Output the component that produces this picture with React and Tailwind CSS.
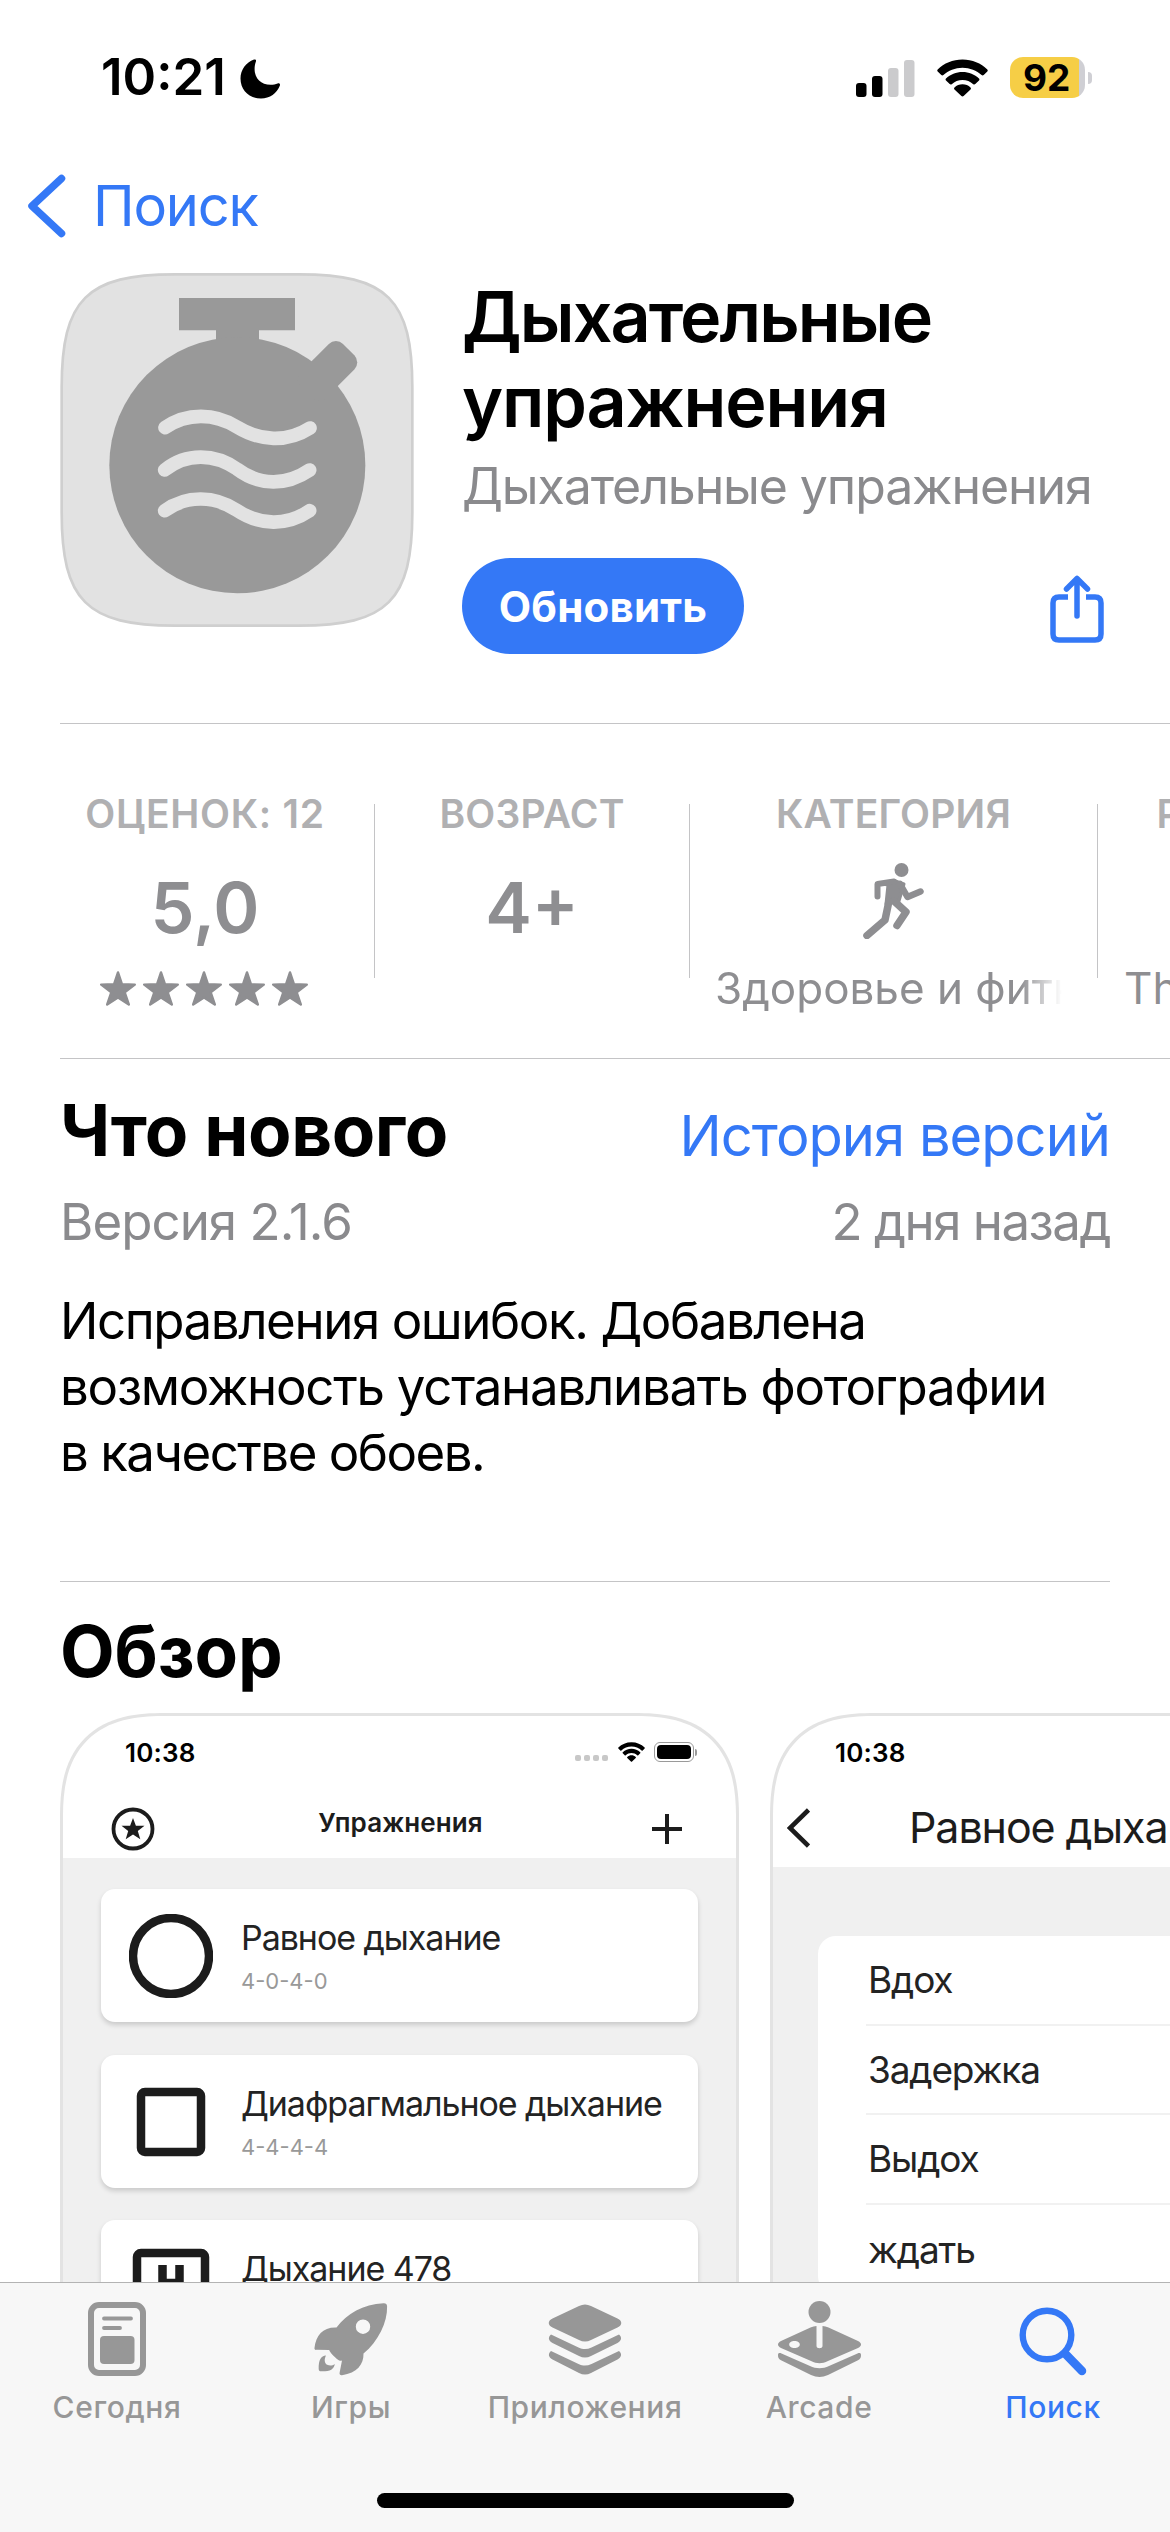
import React from 'react';

const MoonIcon = () => (
  <svg className="h-[40px] w-[41px]" viewBox="0 0 41 40" fill="currentColor">
    <path d="M14 .6c1.200-.5 2.400.4 2 1.700-1 2.800-1.400 5-1.400 7.700 0 9.500 6.500 15.800 16 15.800 2.700 0 5-.5 7-1.300 1.600-.7 2.900.5 2.300 2C37 34.400 29.800 39.500 21 39.500 9.200 39.500.5 31 .5 19.500.5 11 6 3.500 14 .6z" />
  </svg>
);

const SignalIcon = () => (
  <svg className="h-[38px] w-[59px]" viewBox="0 0 59 38">
    <rect x="0" y="24" width="10.500" height="14" rx="3" fill="#000" />
    <rect x="16" y="17" width="10.500" height="21" rx="3" fill="#000" />
    <rect x="32" y="9" width="10.500" height="29" rx="3" fill="#cbcbcd" />
    <rect x="48" y="1" width="10.500" height="37" rx="3" fill="#cbcbcd" />
  </svg>
);

const WifiIcon = ({ className }) => (
  <svg className={className} viewBox="0 0 51 37" fill="currentColor">
    <path d="M25.500 0C35.300 0 44 3.800 50.300 9.900c.6.600.6 1.500 0 2.100l-3.600 3.600c-.6.600-1.500.6-2.100 0C39.600 11 32.900 8.200 25.500 8.200S11.400 11 6.400 15.600c-.6.600-1.500.6-2.100 0L.7 12c-.6-.6-.6-1.500 0-2.100C7 3.800 15.700 0 25.500 0z" />
    <path d="M25.500 12.400c6.400 0 12.200 2.500 16.500 6.500.6.600.6 1.500 0 2.100l-3.700 3.600c-.5.600-1.400.6-2 .1-2.900-2.600-6.700-4.200-10.800-4.200s-7.900 1.600-10.800 4.200c-.6.500-1.500.5-2-.1L9 21c-.6-.6-.6-1.500 0-2.100 4.300-4 10.100-6.500 16.500-6.500z" />
    <path d="M25.500 24.800c3.100 0 5.900 1.200 8 3.100.6.600.6 1.500 0 2.100l-6.900 6.600c-.6.600-1.600.6-2.200 0L17.500 30c-.6-.6-.6-1.500 0-2.100 2.100-1.900 4.900-3.100 8-3.100z" />
  </svg>
);

const AppIcon = () => (
  <svg className="size-[354px] shrink-0" viewBox="60 68 1062 1062">
    <path
      d="M405 72H777C1042 72 1117 147 1117 412V786C1117 1051 1042 1126 777 1126H405C140 1126 65 1051 65 786V412C65 147 140 72 405 72z"
      fill="#e2e2e2"
      stroke="#cfcfcf"
      strokeWidth="8"
    />
    <g fill="#999">
      <path d="M417 143h348v97H657v60H528v-60H417z" />
      <circle cx="592" cy="645" r="384" />
      <rect x="-54" y="0" width="108" height="180" rx="30" transform="translate(926 298) rotate(45)" />
    </g>
    <g fill="none" stroke="#e2e2e2" strokeWidth="41" strokeLinecap="round">
      <path d="M375 532C440 486 525 488 591 530C660 572 740 578 810 533" />
      <path d="M374 659C440 606 525 610 591 656C660 708 740 706 809 659" />
      <path d="M374 781C440 733 525 736 591 780C660 826 740 828 809 781" />
    </g>
  </svg>
);

const ShareIcon = () => (
  <svg
    className="h-[68px] w-[54px]"
    viewBox="0 0 54 68"
    fill="none"
    stroke="currentColor"
    strokeWidth="5.500"
    strokeLinecap="round"
    strokeLinejoin="round"
  >
    <path d="M18 22h-9c-4 0-6 2-6 6v31c0 4 2 6 6 6h36c4 0 6-2 6-6V28c0-4-2-6-6-6h-9" strokeLinecap="butt" />
    <path d="M27 41V4M16.500 14L27 3.500 37.500 14" />
  </svg>
);

const Star = ({ className }) => (
  <svg
    className={className}
    viewBox="0 0 36 35"
    fill="currentColor"
    stroke="currentColor"
    strokeWidth="2.400"
    strokeLinejoin="round"
  >
    <path d="M18 1.500L22 13.300L34.800 13.600L24.700 21.300L28.800 33.500L18 26.400L7.200 33.500L11.300 21.300L1.200 13.600L14 13.300z" />
  </svg>
);

const RunnerIcon = () => (
  <svg className="h-[76px] w-[61px]" viewBox="0 0 61 76" fill="none" stroke="currentColor" strokeLinecap="round" strokeLinejoin="round">
    <circle cx="38.500" cy="7" r="7" fill="currentColor" stroke="none" />
    <path d="M17 20.500L31 17.500L41 21L36 38L23 41L25 22z" fill="currentColor" strokeWidth="3" />
    <path d="M14.500 33.500V21L31 18.500" strokeWidth="6" />
    <path d="M37 21L44.500 34L57.500 28.500" strokeWidth="6.500" />
    <path d="M26 38L22 57L4 72.500" strokeWidth="7.500" />
    <path d="M31 38L43 49L34 62.500" strokeWidth="7.500" />
  </svg>
);

const TodayIcon = () => (
  <svg className="h-[74px] w-[58px]" viewBox="0 0 58 74">
    <rect x="3" y="3" width="52" height="68" rx="8" fill="none" stroke="currentColor" strokeWidth="6" />
    <path d="M16 16.500h27M16 26h16" stroke="currentColor" strokeWidth="3.800" strokeLinecap="round" />
    <rect x="12" y="34" width="34.500" height="28" rx="4" fill="currentColor" />
  </svg>
);

const RocketIcon = () => (
  <svg className="h-[73px] w-[74px]" viewBox="0 0 74 73" fill="currentColor">
    <path
      fillRule="evenodd"
      d="M69.500.2c2.300-.2 3.500 1 3.600 3.200C73.500 19 64.500 38 49.500 50.500C49.800 61.500 43 70 28 72.200c-1.800.2-2.700-.7-2.400-2.400L28 57.500c-1.500.4-3 .2-4-.7c-4.500-3.600-8-7.200-8.800-9.800L2.800 46.800C1.200 47.200.200 46.500.5 44.800C2 32 9 24 22.500 24.500C33 10.500 49 1.200 69.500.2zM49 16.500a7.200 7.200 0 1 0 .01 14.400a7.200 7.200 0 0 0-.01-14.400z"
    />
    <path d="M12 52.500c-5 .5-7.500 4-7.300 13.500c0 1.500.8 2.300 2.300 2.300c9 .2 13-1.800 13.800-7.300c-2.300 1.700-5 2-7.600.8c-2.700-1.500-3.300-5.400-1.200-9.300z" />
  </svg>
);

const LayersIcon = () => (
  <svg className="h-[71px] w-[74px]" viewBox="0 0 74 71" fill="currentColor">
    <path d="M31 2c4-2 8-2 12 0l26.500 12.500c5 2.500 5 6.500 0 9L43 36c-4 2-8 2-12 0L4.500 23.500c-5-2.500-5-6.500 0-9z" />
    <path d="M3 30.500l27.500 13c4.500 2 8.500 2 13 0l27.500-13c3 2.500 3 6-1.500 8.500L43 52c-4 2-8 2-12 0L4.500 39C0 36.500 0 33 3 30.500z" />
    <path d="M3 47l27.500 13c4.500 2 8.500 2 13 0L71 47c3 2.500 3 6-1.500 8.500L43 69c-4 2-8 2-12 0L4.500 55.500C0 53 0 49.500 3 47z" />
  </svg>
);

const ArcadeIcon = () => (
  <svg className="h-[76px] w-[83px]" viewBox="0 0 83 76" fill="currentColor">
    <circle cx="41.500" cy="11" r="11" />
    <path
      fillRule="evenodd"
      d="M38.500 25v20c0 3 6 3 6 0V25c2 0 4 .5 6 1.500L80 40c4 2 4 5 0 7L50 60c-6 3-11 3-17 0L3 47c-4-2-4-5 0-7l29.500-13.500c2-1 4-1.500 6-1.500zM16.500 40c-3 0-5.300 1.500-5.300 3.500S13.500 47 16.500 47s5.300-1.500 5.300-3.500S19.500 40 16.500 40z"
    />
    <path d="M0 54c0-2 1.500-2.500 3.500-1.500L32 65c6 3 13 3 19 0l28.500-12.500C81.500 51.500 83 52 83 54c0 2.500-.5 4-3 5.200L50 74c-6 2.500-11 2.500-17 0L3 59.200C.5 58 0 56.500 0 54z" />
  </svg>
);

const SearchIcon = () => (
  <svg className="h-[78px] w-[68px]" viewBox="0 0 68 78" fill="none" stroke="currentColor">
    <circle cx="28" cy="35" r="24.300" strokeWidth="6.400" />
    <path d="M46.500 54L63 71" strokeWidth="8.500" strokeLinecap="round" />
  </svg>
);

const tabs = [
  { label: 'Сегодня', icon: TodayIcon },
  { label: 'Игры', icon: RocketIcon },
  { label: 'Приложения', icon: LayersIcon },
  { label: 'Arcade', icon: ArcadeIcon },
  { label: 'Поиск', icon: SearchIcon, active: true }
];

const exercises = [
  {
    title: 'Равное дыхание',
    pattern: '4-0-4-0',
    icon: <circle cx="42" cy="42" r="38" />
  },
  {
    title: 'Диафрагмальное дыхание',
    pattern: '4-4-4-4',
    icon: <rect x="12" y="12" width="60" height="60" rx="4" />
  },
  {
    title: 'Дыхание 478',
    pattern: '4-7-8-0',
    icon: (
      <>
        <rect x="8" y="8" width="68" height="68" rx="4" />
        <path d="M33.500 20v22M50.500 20v22M33 38h17" />
      </>
    )
  }
];

const phases = ['Вдох', 'Задержка', 'Выдох', 'ждать'];

const StatusBar = () => (
  <div className="flex h-[155px] shrink-0 items-center pl-[101px] pr-[78px]">
    <span className="text-[51px] font-semibold">10:21</span>
    <div className="ml-[14px] pt-[2px]">
      <MoonIcon />
    </div>
    <div className="ml-auto flex items-center">
      <SignalIcon />
      <WifiIcon className="ml-[22px] h-[38px] w-[51px]" />
      <div className="ml-[22px] flex h-[41px] w-[75px] items-center rounded-[13px] bg-linear-to-r from-[#f6ce46] from-92% to-[#cfcfd4] to-92% pl-[13px]">
        <span className="text-[37px] leading-none font-bold">92</span>
      </div>
      <div className="ml-[3px] h-[12px] w-[4px] rounded-r-full bg-[#cfcfd4]" />
    </div>
  </div>
);

const Header = () => (
  <div className="flex h-[467px] shrink-0 pl-[60px] pr-[60px] pt-[17px]">
    <AppIcon />
    <div className="ml-[48px] flex-1 pt-px">
      <h1 className="text-[70px] leading-[85px] font-semibold tracking-[-1.150px]">
        <span className="tracking-[-1.900px]">Дыхательные</span>
        <br />
        упражнения
      </h1>
      <p className="mt-[10px] text-[50px] leading-[64px] tracking-[-1.100px] whitespace-nowrap text-[#8a8a8d]">
        Дыхательные упражнения
      </p>
      <div className="mt-[40px] flex items-center justify-between">
        <button className="h-[96px] w-[282px] rounded-full bg-[#3478f6] text-[42px] font-bold tracking-[0.2px] text-white">
          Обновить
        </button>
        <div className="mr-[6px] mt-[5px] text-[#3478f6]">
          <ShareIcon />
        </div>
      </div>
    </div>
  </div>
);

const Stat = ({ label, className, children, caption }) => (
  <div className={`flex shrink-0 flex-col items-center pt-[70px] text-[#8e8e91] ${className}`}>
    <div className="text-[39px] leading-[40px] font-semibold tracking-[0.2px] whitespace-nowrap text-[#b0b0b2]">
      {label}
    </div>
    <div className="mt-[32px] flex h-[84px] items-center text-[70px] leading-[84px] font-semibold">{children}</div>
    <div className="mt-[11px] flex h-[54px] w-full items-center justify-center text-[44px] leading-[54px]">
      {caption}
    </div>
  </div>
);

const StatDivider = () => <div className="mt-[80px] h-[174px] w-px shrink-0 bg-[#c4c4c6]" />;

const Stats = () => (
  <div className="flex h-[334px] shrink-0 overflow-hidden pl-[36px]">
    <Stat
      label={<span className="tracking-[0.700px]">ОЦЕНОК: 12</span>}
      className="w-[338px]"
      caption={
        <div className="-ml-[3px] flex gap-[7px]">
          {[1, 2, 3, 4, 5].map((n) => (
            <Star key={n} className="h-[35px] w-[36px]" />
          ))}
        </div>
      }
    >
      5,0
    </Stat>
    <StatDivider />
    <Stat label="ВОЗРАСТ" className="w-[314px]">
      4+
    </Stat>
    <StatDivider />
    <Stat
      label="КАТЕГОРИЯ"
      className="w-[407px]"
      caption={
        <div className="-ml-[3px] w-[354px] overflow-hidden whitespace-nowrap [mask-image:linear-gradient(to_right,#000_86%,transparent_98%)]">
          Здоровье и фитнес
        </div>
      }
    >
      <div className="-mt-[15px]">
        <RunnerIcon />
      </div>
    </Stat>
    <StatDivider />
    <Stat
      label="РАЗРАБОТЧИК"
      className="w-[409px]"
      caption={<div className="w-full pl-[26px] whitespace-nowrap">Think Small</div>}
    />
  </div>
);

const WhatsNew = () => (
  <div className="h-[522px] shrink-0 px-[60px] pt-[29px]">
    <div className="flex items-baseline justify-between">
      <h2 className="text-[71px] leading-[84px] font-bold tracking-[-0.450px]">Что нового</h2>
      <span className="text-[56px] leading-[60px] tracking-[-0.950px] text-[#3478f6]">История версий</span>
    </div>
    <div className="mt-[17px] flex justify-between text-[51px] leading-[66px] text-[#8a8a8d]">
      <span className="tracking-[-0.950px]">Версия 2.1.6</span>
      <span className="tracking-[-1.500px]">2 дня назад</span>
    </div>
    <p className="mt-[33px] text-[51px] leading-[66px] tracking-[-1.420px] whitespace-nowrap">
      Исправления ошибок. Добавлена
      <br />
      <span className="tracking-[-1.250px]">возможность устанавливать фотографии</span>
      <br />
      <span className="tracking-[-1.500px]">в качестве обоев.</span>
    </p>
  </div>
);

const ExercisesScreen = () => (
  <div className="h-[1200px] w-[679px] shrink-0 overflow-hidden rounded-[105px] border-[3px] border-[#e3e3e3] [corner-shape:superellipse(1.35)]">
    <div className="flex h-[72px] items-center pl-[62px] pr-[39px]">
      <span className="text-[26px] font-semibold tracking-[0.2px]">10:38</span>
      <div className="ml-auto mt-[12px] flex gap-[3px]">
        {[1, 2, 3, 4].map((n) => (
          <div key={n} className="size-[6px] rounded-[2px] bg-[#c8c8c8]" />
        ))}
      </div>
      <WifiIcon className="ml-[10px] h-[20px] w-[27px]" />
      <div className="ml-[9px] h-[20px] w-[40px] rounded-[6px] border border-[#9a9a9a] p-[2px]">
        <div className="h-full rounded-[4px] bg-black" />
      </div>
      <div className="ml-px h-[7px] w-[2px] rounded-r bg-[#9a9a9a]" />
    </div>
    <div className="flex h-[70px] items-center justify-between pl-[48px] pr-[53px] text-[#1c1c1c]">
      <svg className="mt-[12px] size-[44px]" viewBox="0 0 44 44">
        <circle cx="22" cy="22" r="19.500" fill="none" stroke="currentColor" strokeWidth="3.800" />
        <path d="M22 11l2.900 7.800h8.600l-6.700 5.200 2.500 8.200L22 27.400l-7.300 4.800 2.500-8.200-6.700-5.200h8.600z" fill="currentColor" />
      </svg>
      <span className="-ml-[5px] -mt-px text-[26px] font-semibold tracking-[0.1px]">Упражнения</span>
      <svg className="mt-[12px] size-[32px]" viewBox="0 0 32 32" stroke="currentColor" strokeWidth="4">
        <path d="M1 16h30M16 1v30" />
      </svg>
    </div>
    <div className="flex h-full flex-col gap-[32.500px] bg-[#f0f0f0] px-[38px] pt-[31px]">
      {exercises.map((item) => (
        <div
          key={item.title}
          className="flex h-[133px] shrink-0 rounded-[14px] bg-white pl-[28px] shadow-[0_3px_5px_rgba(0,0,0,0.16)]"
        >
          <svg
            className="mt-[25px] size-[84px] text-[#1c1c1c]"
            viewBox="0 0 84 84"
            fill="none"
            stroke="currentColor"
            strokeWidth="8.500"
          >
            {item.icon}
          </svg>
          <div className="ml-[28px] pt-[29px]">
            <div className="text-[34px] leading-[40px] tracking-[-1.050px] whitespace-nowrap text-[#232323]">
              {item.title}
            </div>
            <div className="mt-[9px] text-[22px] leading-[28px] text-[#999]">{item.pattern}</div>
          </div>
        </div>
      ))}
    </div>
  </div>
);

const PhasesScreen = () => (
  <div className="h-[1200px] w-[679px] shrink-0 overflow-hidden rounded-[105px] border-[3px] border-[#e3e3e3] [corner-shape:superellipse(1.35)]">
    <div className="flex h-[72px] items-center pl-[62px]">
      <span className="text-[26px] font-semibold tracking-[0.2px]">10:38</span>
    </div>
    <div className="flex h-[79px] items-center pl-[14px] text-[#1c1c1c]">
      <svg className="h-[40px] w-[23px]" viewBox="0 0 23 40" fill="none" stroke="currentColor" strokeWidth="4.600">
        <path d="M21.500 2L3 20l18.500 18" />
      </svg>
      <span className="ml-[99px] text-[43px] tracking-[-1.100px] whitespace-nowrap">Равное дыхание</span>
    </div>
    <div className="h-full bg-[#f0f0f0] pl-[45px] pt-[69px]">
      <div className="rounded-[18px] bg-white pl-[48px]">
        {phases.map((phase) => (
          <div
            key={phase}
            className="flex h-[89.500px] items-center border-b-2 border-[#f1f1f1] pl-[2px] text-[37px] tracking-[-1.150px] text-[#232323] last:border-0"
          >
            {phase}
          </div>
        ))}
      </div>
    </div>
  </div>
);

const TabBar = () => (
  <div className="flex h-[250px] shrink-0 flex-col items-center border-t border-[#b3b3b3] bg-[#f7f7f7]">
    <div className="flex w-full">
      {tabs.map(({ label, icon: Icon, active }) => (
        <div
          key={label}
          className={`flex w-[234px] shrink-0 flex-col items-center ${active ? 'text-[#3478f6]' : 'text-[#979797]'}`}
        >
          <div className="flex h-[112px] items-center">
            <Icon />
          </div>
          <span className="text-[30px] leading-[24px] font-medium tracking-[0.6px]">{label}</span>
        </div>
      ))}
    </div>
    <div className="mt-auto mb-[24px] h-[15px] w-[417px] rounded-full bg-black" />
  </div>
);

const App = () => {
  return (
    <div className="flex h-[2532px] w-[1170px] flex-col overflow-hidden bg-white font-['Inter','Liberation_Sans',sans-serif] text-black">
      <div className="flex min-h-0 flex-1 flex-col overflow-hidden">
        <StatusBar />

        {/* Navigation */}
        <div className="flex h-[101px] shrink-0 items-center pl-[27px] text-[#3478f6]">
          <svg className="h-[64px] w-[39px]" viewBox="0 0 39 64" fill="none" stroke="currentColor" strokeWidth="7.500" strokeLinecap="round" strokeLinejoin="round">
            <path d="M34.500 4.500L5 32l29.500 27.500" />
          </svg>
          <span className="ml-[27px] text-[56px] leading-[64px] tracking-[-1.200px]">Поиск</span>
        </div>

        <Header />
        <div className="ml-[60px] h-px shrink-0 bg-[#c4c4c6]" />
        <Stats />
        <div className="ml-[60px] h-px shrink-0 bg-[#c4c4c6]" />
        <WhatsNew />
        <div className="mx-[60px] h-px shrink-0 bg-[#c4c4c6]" />

        {/* Preview */}
        <h2 className="mt-[27px] ml-[60px] shrink-0 text-[71px] leading-[84px] font-bold tracking-[-0.1px]">Обзор</h2>
        <div className="mt-[20px] flex min-h-0 flex-1 gap-[31px] overflow-hidden pl-[60px]">
          <ExercisesScreen />
          <PhasesScreen />
        </div>
      </div>
      <TabBar />
    </div>
  );
};

export default App;
